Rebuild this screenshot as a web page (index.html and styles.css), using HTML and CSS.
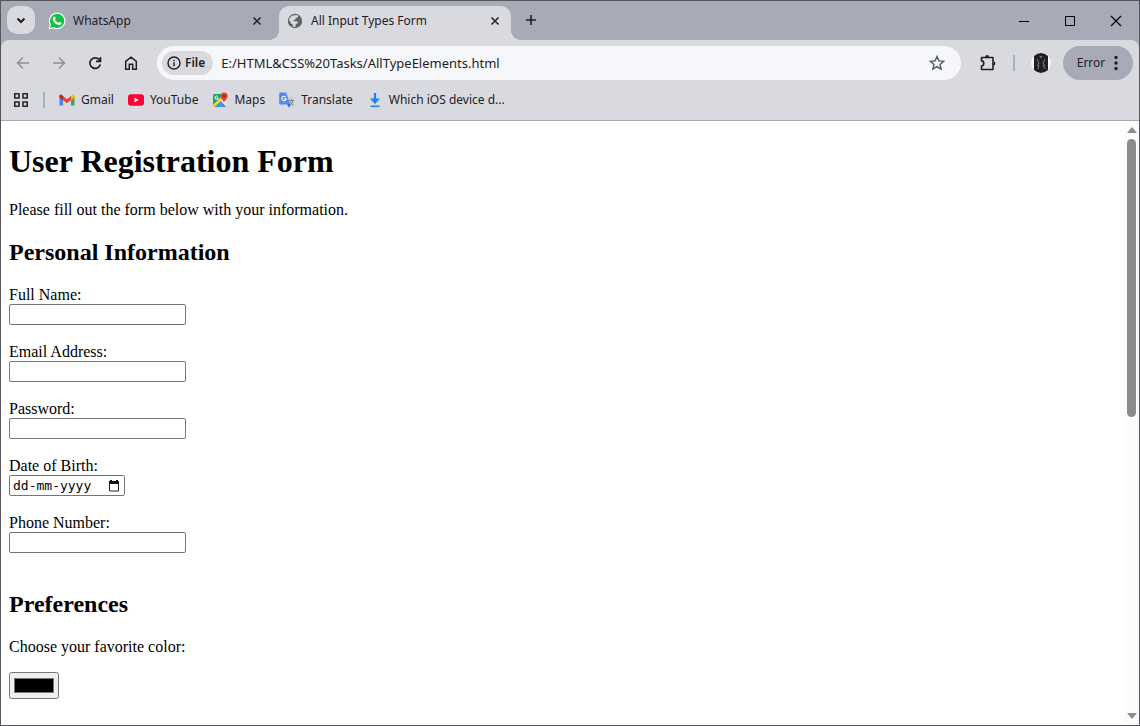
FILE: index.html
```html
<!DOCTYPE html>
<html lang="en">
<head>
<meta charset="utf-8">
<title>All Input Types Form</title>
<link rel="stylesheet" href="styles.css">
</head>
<body>
<div class="window">
  <header class="tabstrip">
    <button class="tab-search" aria-label="Search tabs"><svg width="28" height="28" viewBox="0 0 28 28"><path d="M10.500 12.500l3.500 3.500 3.500-3.500" fill="none" stroke="#1f2023" stroke-width="2"/></svg></button>
    <div class="tab">
      <svg width="18" height="18" viewBox="0 0 18 18"><path d="M0.500 17.500l1.300-4.700A8.300 8.300 0 1 1 5.200 16.200z" fill="#fff"/><path d="M2 16l1-3.500A7.100 7.100 0 1 1 5.500 15z" fill="#12c244"/><path d="M5.800 4.800c.4-.4 1-.3 1.200.1l.7 1.600c.1.300 0 .5-.7 1.300.8 1.500 1.800 2.500 3.400 3.200.7-.9.900-1.200 1.300-1l1.700.9c.4.300.1 1.300-.4 1.700-1.200 1.100-3 .6-4.800-.5-1.700-1.100-3.400-3.200-3.500-4.900 0-1 .5-1.800 1.100-2.400z" fill="#fff"/></svg>
      <span class="tab-title">WhatsApp</span>
      <button class="tab-close" aria-label="Close WhatsApp"><svg width="16" height="16" viewBox="0 0 16 16"><path d="M4.500 4.500l7 7m0-7l-7 7" stroke="#26282b" stroke-width="1.600"/></svg></button>
    </div>
    <div class="tab active">
      <svg width="18" height="18" viewBox="0 0 18 18"><circle cx="9" cy="9" r="7.200" fill="#5f6368"/><path d="M8.500 3.200h3.700c.3 1.700-.7 2.700-2.500 2.600L9.500 7.500 7.600 8l-.1 1.200h3c1.300.3 1.500 1.500 1.200 2.300l-1.900.2-.3 3c-1 .4-2.100.1-2.700-.3l.1-2c-2-.3-2.400-1.300-2.500-2.700L3 8c.4-2.700 2.600-4.800 5.500-4.800z" fill="#d9dae0"/></svg>
      <span class="tab-title">All Input Types Form</span>
      <button class="tab-close" aria-label="Close All Input Types Form"><svg width="16" height="16" viewBox="0 0 16 16"><path d="M4.500 4.500l7 7m0-7l-7 7" stroke="#26282b" stroke-width="1.600"/></svg></button>
    </div>
    <button class="new-tab" aria-label="New tab"><svg width="16" height="16" viewBox="0 0 16 16"><path d="M8 3v10M3 8h10" stroke="#1f2023" stroke-width="1.600"/></svg></button>
    <div class="window-controls">
      <button aria-label="Minimize"><svg width="12" height="12" viewBox="0 0 12 12"><path d="M1 6.500h10" stroke="#000"/></svg></button>
      <button aria-label="Maximize"><svg width="12" height="12" viewBox="0 0 12 12"><path d="M1.500 1.500h9v9h-9z" fill="none" stroke="#000"/></svg></button>
      <button aria-label="Close"><svg width="12" height="12" viewBox="0 0 12 12"><path d="M1 1l10 10M11 1L1 11" stroke="#000" stroke-width="1.200"/></svg></button>
    </div>
  </header>

  <div class="chrome">
    <nav class="toolbar" aria-label="Navigation">
      <button class="tool" aria-label="Back" disabled><svg width="18" height="18" viewBox="0 0 18 18"><path d="M15 9H4M9 3.500L3.500 9 9 14.500" fill="none" stroke="#8e9096" stroke-width="1.500"/></svg></button>
      <button class="tool" aria-label="Forward" disabled><svg width="18" height="18" viewBox="0 0 18 18"><path d="M3 9h11M9 3.500L14.500 9 9 14.500" fill="none" stroke="#8e9096" stroke-width="1.500"/></svg></button>
      <button class="tool" aria-label="Reload"><svg width="18" height="18" viewBox="0 0 18 18"><path d="M14.300 10.500A5.300 5.300 0 1 1 13 5.400L14.300 6.800M14.500 3v4.300H10" fill="none" stroke="#1f2023" stroke-width="1.700"/></svg></button>
      <button class="tool" aria-label="Home"><svg width="18" height="18" viewBox="0 0 18 18"><path d="M3.700 15.200V7.400L9 3.200l5.300 4.200v7.800h-3.600v-5H7.300v5z" fill="none" stroke="#1f2023" stroke-width="1.500"/></svg></button>
      <div class="omnibox">
        <button class="site-chip"><svg width="16" height="16" viewBox="0 0 16 16"><circle cx="8" cy="8" r="6" fill="none" stroke="#1f2023" stroke-width="1.400"/><path d="M8 7.200v4M8 4.700v1.500" stroke="#1f2023" stroke-width="1.400"/></svg><span>File</span></button>
        <input class="address" type="text" aria-label="Address" value="E:/HTML&amp;CSS%20Tasks/AllTypeElements.html">
        <button class="star" aria-label="Bookmark this tab"><svg width="18" height="18" viewBox="0 0 18 18"><path d="M9 2.500l1.900 4.400 4.700.4-3.600 3.100 1.100 4.700L9 12.600l-4.100 2.500L6 10.400 2.400 7.300l4.700-.4z" fill="none" stroke="#55585d" stroke-width="1.400"/></svg></button>
      </div>
      <div class="actions">
        <button class="ext" aria-label="Extensions"><svg width="18" height="18" viewBox="0 0 18 18"><path d="M2.500 3.500h11.500v12H2.500v-3.400c2.700-.1 3.300-4.900 0-5.200z" fill="none" stroke="#1f2023" stroke-width="1.600" stroke-linejoin="round"/><path d="M6.300 3a1.900 1.900 0 0 1 3.800 0zM14.500 7.600a1.900 1.900 0 0 1 0 3.800z" fill="#1f2023"/></svg></button>
        <span class="divider"></span>
        <button class="avatar" aria-label="Profile"><svg width="20" height="20" viewBox="0 0 20 20"><circle cx="10" cy="10" r="10" fill="#f5f6f8"/><path d="M3 3Q10-3 17 3v14q-7 6-14 0z" fill="#202020"/><path d="M6 6l2 4-2 3M14 6l-2 4 2 3M8 12l-1 4M12 12l2 4M9 3l1 2 1-2" fill="none" stroke="#969696" stroke-width=".8"/></svg></button>
        <button class="error"><span>Error</span><svg width="6" height="18" viewBox="0 0 6 18"><g fill="#1f2023"><circle cx="3" cy="3.500" r="1.700"/><circle cx="3" cy="9" r="1.700"/><circle cx="3" cy="14.500" r="1.700"/></g></svg></button>
      </div>
    </nav>
    <nav class="bookmarks" aria-label="Bookmarks">
      <button class="apps" aria-label="Apps"><svg width="16" height="16" viewBox="0 0 16 16"><path d="M1.800 1.800h4.200v4.200H1.800zM10 1.800h4.200v4.200H10zM1.800 10h4.200v4.200H1.800zM10 10h4.200v4.200H10z" fill="none" stroke="#26282b" stroke-width="1.600"/></svg></button>
      <span class="divider"></span>
      <a class="bookmark" href="#gmail"><svg width="16" height="16" viewBox="0 0 16 16"><path d="M0.500 4v9.500H4V6z" fill="#4285f4"/><path d="M15.500 4v9.500H12V6z" fill="#34a853"/><path d="M12 4l1.500-1.200c1-.5 2 .1 2 1.200v1.500L12 8.300z" fill="#fbbc04"/><path d="M4 4l4 3.200L12 4v4.300l-4 3-4-3z" fill="#ea4335"/><path d="M4 4L2.500 2.800C1.500 2.300.5 2.900.5 4v1.500L4 8.300z" fill="#c5221f"/></svg><span>Gmail</span></a>
      <a class="bookmark" href="#youtube"><svg width="16" height="16" viewBox="0 0 16 16"><rect x="0" y="2.200" width="16" height="11.600" rx="3" fill="#ff0033"/><path d="M6.500 5.500L10.700 8l-4.200 2.500z" fill="#fff"/></svg><span>YouTube</span></a>
      <a class="bookmark" href="#maps"><svg width="16" height="16" viewBox="0 0 16 16"><rect x="1" y="2" width="13" height="13" rx="1.500" fill="#1fa463"/><path d="M2 15L8 8.500 14 15z" fill="#4a8cf7"/><path d="M1 13L10 4l2 2-9.500 9H1z" fill="#fdd440"/><path d="M3 15l5-5 5 5z" fill="#4a8cf7"/><path d="M8.500 9l5.500 5.500V8.500L11 6z" fill="#e7e9ec"/><path d="M5.700 4.500a1.600 1.600 0 1 0 .5 1.500H4.800" fill="none" stroke="#fff"/><path d="M12 11c-.3-3-3.500-4-3.500-7a3.600 3.600 0 0 1 7.200 0c0 3-3.300 4-3.700 7z" fill="#e04436"/><circle cx="12.100" cy="4" r="1.300" fill="#7f2119"/></svg><span>Maps</span></a>
      <a class="bookmark" href="#translate"><svg width="16" height="16" viewBox="0 0 16 16"><path d="M6 5h9.500v10.500H9z" fill="#cdd0d4"/><path d="M8 12h4l-2 3.500z" fill="#2a55bd"/><path d="M1.200.5h6l4 12h-10q-1 0-1-1v-10q0-1 1-1z" fill="#4c8bf5"/><path d="M6.600 4.900A2.200 2.200 0 1 0 7.200 6.700H5" fill="none" stroke="#fff" stroke-width="1.100"/><path d="M10 8.500h5M12.500 7v1.500M14 8.500q-.6 3-3 4.500M11 10q1.300 2 3.500 3" fill="none" stroke="#7b858e"/></svg><span>Translate</span></a>
      <a class="bookmark" href="#ios"><svg width="16" height="16" viewBox="0 0 16 16"><path d="M8 1v8" stroke="#1a84f5" stroke-width="2.200"/><path d="M3.500 14.300h9" stroke="#1a84f5" stroke-width="1.600"/><path d="M3 6.500h10L8 12z" fill="#1a84f5"/></svg><span>Which iOS device d...</span></a>
    </nav>
  </div>

  <div class="viewport">
    <main class="page">
      <h1>User Registration Form</h1>
      <p>Please fill out the form below with your information.</p>
      <form>
        <section class="group">
          <h2>Personal Information</h2>
          <div class="field"><label for="name">Full Name:</label><input class="text" type="text" id="name"></div>
          <div class="field"><label for="email">Email Address:</label><input class="text" type="email" id="email"></div>
          <div class="field"><label for="password">Password:</label><input class="text" type="password" id="password"></div>
          <div class="field"><label for="dob">Date of Birth:</label>
            <div class="date"><input type="text" id="dob" placeholder="dd-mm-yyyy"><button type="button" aria-label="Show calendar"><svg width="14" height="14" viewBox="0 0 14 14"><path d="M2.500 3.500h9v8.500h-9z" fill="none" stroke="#222"/><path d="M2 2h10v3H2zM3 1h2v1H3zM9 1h2v1H9z" fill="#111"/></svg></button></div></div>
          <div class="field"><label for="phone">Phone Number:</label><input class="text" type="tel" id="phone"></div>
        </section>
        <h2>Preferences</h2>
        <p><label for="color">Choose your favorite color:</label></p>
        <input class="color" type="color" id="color" value="#000000">
      </form>
    </main>
    <div class="scrollbar" aria-hidden="true">
      <svg width="10" height="6" viewBox="0 0 10 6"><path d="M5 0l5 6H0z" fill="#8b8b8b"/></svg>
      <div class="track"><div class="thumb"></div></div>
      <svg width="10" height="6" viewBox="0 0 10 6"><path d="M0 0h10L5 6z" fill="#8b8b8b"/></svg>
    </div>
  </div>
</div>
</body>
</html>
```
FILE: styles.css
```css
* { box-sizing: border-box; }
body { margin: 0; color: #000; font: 16px/18px "Liberation Serif", "Times New Roman", serif; }
svg { display: block; flex: none; }
button { display: flex; align-items: center; justify-content: center; margin: 0; padding: 0; border: 0; background: none; color: inherit; font: inherit; }

.window { display: flex; flex-direction: column; height: 100vh; overflow: hidden; border: 1px solid #56575c; background: #a8abb7; }

.tabstrip, .chrome { color: #1f2023; font: 12px/16px "Segoe UI", "Noto Sans", "Open Sans", sans-serif; }
.tabstrip { display: flex; flex: none; align-items: stretch; height: 39px; padding-left: 6px; }
.tab-search { width: 28px; height: 28px; margin: 5px 6px 0 0; border-radius: 10px; background: #d9dae0; }
.tab { position: relative; display: flex; align-items: center; gap: 7px; width: 232px; margin: 5px 6px 0 0; padding: 0 8px 5px 7px; border-radius: 10px 10px 0 0; }
.tab-title { flex: 1; overflow: hidden; white-space: nowrap; }
.tab-close { width: 16px; height: 16px; }
.active { background: #d9dae0; }
.active::before, .active::after { content: ""; position: absolute; bottom: 0; width: 10px; height: 10px; }
.active::before { left: -10px; background: radial-gradient(circle at 0 0, transparent 10px, #d9dae0 10px); }
.active::after { right: -10px; background: radial-gradient(circle at 100% 0, transparent 10px, #d9dae0 10px); }
.new-tab { width: 28px; height: 28px; margin-top: 5px; }
.window-controls { display: flex; margin-left: auto; }
.window-controls button { width: 46px; }

.chrome { flex: none; border-bottom: 1px solid #a9abb3; border-radius: 8px 8px 0 0; background: #d9dae0; }
.toolbar { display: flex; align-items: center; height: 46px; padding: 0 6px 0 4px; }
.tool { width: 36px; height: 34px; }
.omnibox { display: flex; flex: 1; align-items: center; height: 34px; margin-left: 8px; padding: 0 15px 0 5px; border-radius: 17px; background: #f6f7fa; }
.site-chip { gap: 3px; height: 24px; padding: 0 8px 0 4px; border-radius: 12px; background: #d9dae0; font-weight: 600; }
.address { flex: 1; min-width: 0; margin: 0; padding: 0 8px; border: 0; outline: 0; background: none; color: #1f2023; font: 13px/20px "Segoe UI", "Noto Sans", "Open Sans", sans-serif; }
.actions { display: flex; align-items: center; margin-left: 18px; }
.divider { width: 2px; height: 16px; background: #a8afbd; }
.ext { margin-right: 16px; }
.avatar { margin: 0 12px 0 16px; }
.error { gap: 8px; width: 70px; height: 34px; border-radius: 17px; background: #a8abb7; }

.bookmarks { display: flex; align-items: center; height: 34px; padding: 0 12px 6px; }
.apps { margin-right: 14px; }
.bookmark { display: flex; align-items: center; gap: 6px; margin-left: 14px; color: inherit; text-decoration: none; white-space: nowrap; }

.viewport { display: flex; flex: 1; min-height: 0; background: #fff; }
.page { flex: 1; overflow: hidden; padding: 0 8px; }
h1 { margin: 22px 0 21px; font-size: 32px; line-height: 37px; }
h2 { margin: 20px 0; font-size: 24px; line-height: 27px; }
p { margin: 16px 0; }
.group { display: flow-root; margin-top: -16px; }
.field { display: flex; flex-direction: column; align-items: flex-start; margin-bottom: 18px; }
.text, .date { height: 21px; margin: 0; border: 1px solid #767676; border-radius: 2px; background: #fff; }
.text { width: 177px; padding: 1px 2px; }
.date { display: flex; align-items: center; width: 116px; padding: 0 3px; }
.date input { flex: 1; min-width: 0; margin: 0; padding: 0; border: 0; outline: 0; background: none; font: 13px/17px "DejaVu Sans Mono", monospace; }
.date input::placeholder { color: #000; opacity: 1; }
.color { display: block; width: 50px; height: 27px; margin: 0; }

.scrollbar { display: flex; flex: none; flex-direction: column; align-items: center; gap: 6px; width: 15px; padding: 6px 0; background: #fcfcfc; }
.track { flex: 1; width: 9px; }
.thumb { height: 49%; border-radius: 5px; background: #8b8b8b; }
```
